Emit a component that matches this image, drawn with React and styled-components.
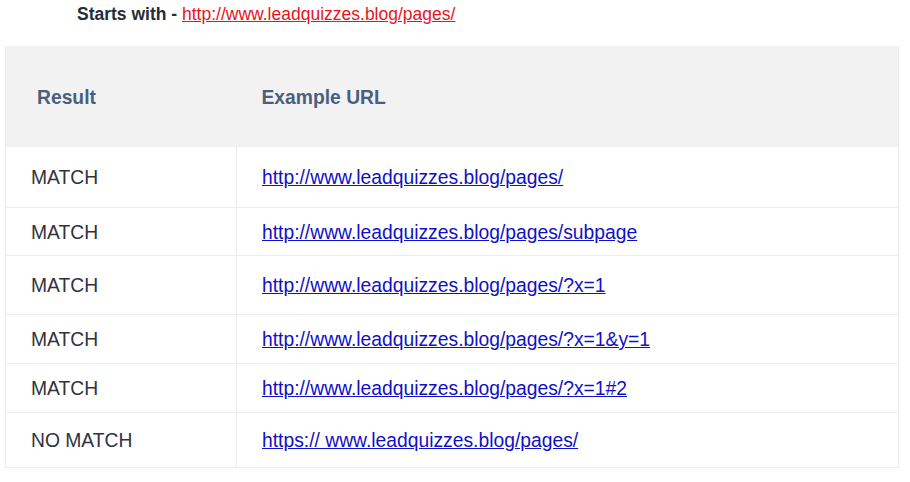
import styled, { createGlobalStyle } from "styled-components";

const rows = [
    { result: "MATCH", url: "http://www.leadquizzes.blog/pages/", h: 60 },
    { result: "MATCH", url: "http://www.leadquizzes.blog/pages/subpage", h: 48 },
    { result: "MATCH", url: "http://www.leadquizzes.blog/pages/?x=1", h: 59 },
    { result: "MATCH", url: "http://www.leadquizzes.blog/pages/?x=1&y=1", h: 49 },
    { result: "MATCH", url: "http://www.leadquizzes.blog/pages/?x=1#2", h: 49 },
    { result: "NO MATCH", url: "https:// www.leadquizzes.blog/pages/", h: 55 },
];

const App = () => {
    return (
        <S.Page>
            <GlobalStyle />
            <S.Rule>
                <S.Label>Starts with - </S.Label>
                <S.RuleLink href="#">http://www.leadquizzes.blog/pages/</S.RuleLink>
            </S.Rule>
            <S.Table>
                <thead>
                    <tr>
                        <S.HeadCell $first>Result</S.HeadCell>
                        <S.HeadCell>Example URL</S.HeadCell>
                    </tr>
                </thead>
                <tbody>
                    {rows.map((row, i) => (
                        <S.Row key={i} $h={row.h}>
                            <S.Cell $first>{row.result}</S.Cell>
                            <S.Cell>
                                <S.UrlLink href="#">{row.url}</S.UrlLink>
                            </S.Cell>
                        </S.Row>
                    ))}
                </tbody>
            </S.Table>
        </S.Page>
    );
}

const GlobalStyle = createGlobalStyle`
    body {
        margin: 0;
        background: #ffffff;
        font-family: "Liberation Sans", Arial, sans-serif;
    }
`;

const S = {
    Page: styled.div`
        width: 910px;
        padding: 0 11px 0 5px;
        box-sizing: border-box;
    `,
    Rule: styled.div`
        height: 46px;
        padding: 4px 0 0 72px;
        box-sizing: border-box;
        font-size: 17.5px;
        line-height: 20px;
        color: #262c38;
    `,
    Label: styled.span`
        font-weight: 700;
    `,
    RuleLink: styled.a`
        color: #e8141c;
        text-decoration: underline;
    `,
    Table: styled.table`
        width: 894px;
        border-collapse: collapse;
        border: 1px solid #ececec;
        border-top: 0;
        font-size: 19.3px;
    `,
    HeadCell: styled.th`
        height: 101px;
        padding: 2px 0 0 ${p => p.$first ? 31 : 25}px;
        width: ${p => p.$first ? "231px" : "auto"};
        background: #f2f2f2;
        color: #4a5f7e;
        font-weight: 700;
        text-align: left;
        box-sizing: border-box;
    `,
    Row: styled.tr`
        height: ${p => p.$h}px;
        border-top: 1px solid #ededed;
        &:first-child {
            border-top: 0;
        }
    `,
    Cell: styled.td`
        padding: 3px 0 0 ${p => p.$first ? 25 : 25}px;
        color: #2e3440;
        border-right: ${p => p.$first ? "1px solid #ededed" : "0"};
        vertical-align: middle;
        box-sizing: border-box;
    `,
    UrlLink: styled.a`
        color: #1010c8;
        text-decoration: underline;
    `,
}

export default App;
